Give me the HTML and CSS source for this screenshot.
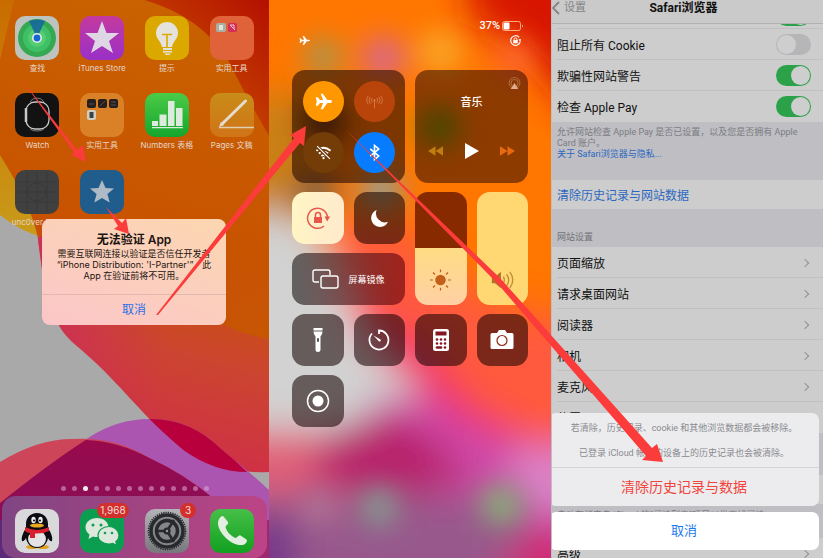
FILE: index.html
```html
<!DOCTYPE html>
<html lang="zh-CN">
<head>
<meta charset="utf-8">
<title>Safari浏览器</title>
<link rel="stylesheet" href="styles.css">
</head>
<body>
<main class="board">

<section class="phone home">
  <svg class="wallpaper" viewBox="0 0 270 558" preserveAspectRatio="none" aria-hidden="true">
    <defs>
      <linearGradient id="sun" x1="0.6" y1="0" x2="0.45" y2="1">
        <stop offset="0" stop-color="#c96200"/><stop offset=".5" stop-color="#c85200"/><stop offset=".72" stop-color="#cc4530"/><stop offset="1" stop-color="#d02a4c"/>
      </linearGradient>
      <linearGradient id="edge" x1="0" y1="0" x2="1" y2="0">
        <stop offset="0" stop-color="#cc2c60" stop-opacity=".9"/><stop offset=".8" stop-color="#cc3050" stop-opacity="0"/>
      </linearGradient>
      <linearGradient id="corner" x1="1" y1="0" x2="0.3" y2="0.8">
        <stop offset="0" stop-color="#b41000"/><stop offset="1" stop-color="#c84e00"/>
      </linearGradient>
      <linearGradient id="gold" x1="0" y1="0" x2="0" y2="1">
        <stop offset="0" stop-color="#c96c00"/><stop offset="1" stop-color="#c9a01c"/>
      </linearGradient>
      <linearGradient id="glow" x1="0" y1="0" x2="0" y2="1">
        <stop offset="0" stop-color="#c75600" stop-opacity="0"/><stop offset="1" stop-color="#c75600"/>
      </linearGradient>
      <linearGradient id="base" x1="0" y1="0" x2="1" y2="0">
        <stop offset="0" stop-color="#5c2a78"/><stop offset="1" stop-color="#a02870"/>
      </linearGradient>
      <linearGradient id="plum" x1="0" y1="0" x2="0" y2="1">
        <stop offset="0" stop-color="#990a4c"/><stop offset="1" stop-color="#80105c"/>
      </linearGradient>
    </defs>
    <rect width="270" height="558" fill="#a9a9a9"/>
    <path fill="url(#gold)" d="M0 0H100V260L42 237Q20 231 0 215Z"/>
    <path fill="url(#sun)" d="M14 0H270V472Q215 475 172 440C140 412 116 378 76 345C48 322 44 285 38 238Q32 206 0 155V60Z"/>
    <path fill="url(#edge)" d="M38 238C44 285 48 322 76 345C116 378 140 412 172 440L200 455V330L60 225Z"/>
    <path fill="url(#corner)" d="M145 0H270V136Q246 95 228 58Q200 16 145 0Z"/>
    <path fill="url(#glow)" d="M200 220H270V339Q242 334 224 324L200 310Z"/>
    <path fill="#ab55b0" d="M0 502Q55 458 90 437Q118 419 150 419Q190 418 222 449Q248 470 270 490V558H0Z"/>
    <path fill="#b8003c" d="M150 419Q190 418 222 449Q236 460 248 472Q215 472 184 450Q165 434 150 419Z"/>
    <path fill="#cd4558" d="M0 462Q38 439 72 439Q115 436 150 458Q185 474 215 499V558H0Z"/>
    <path fill="url(#plum)" d="M0 503Q50 463 86 440Q118 441 150 458Q185 474 215 499V558H0Z"/>
    <rect y="520" width="270" height="38" fill="url(#base)"/>
  </svg>

  <nav class="apps" aria-label="App">
    <a class="app" href="#"><svg class="icon" viewBox="0 0 44 44" aria-hidden="true"><rect width="44" height="44" rx="10" fill="#bdc3bf"/><circle cx="22" cy="22" r="19" fill="#35a852"/><circle cx="22" cy="22" r="14" fill="#3fc066"/><circle cx="22" cy="22" r="9" fill="#54cc70"/><path d="M22 22L14 5Q22 2 30 5Z" fill="#17679a" opacity=".9"/><circle cx="22" cy="22" r="5" fill="#e8eef0"/><circle cx="22" cy="22" r="3.400" fill="#1668d0"/></svg><span>查找</span></a>
    <a class="app" href="#"><svg class="icon" viewBox="0 0 44 44" aria-hidden="true"><defs><linearGradient id="it" x1="0" y1="0" x2="0" y2="1"><stop offset="0" stop-color="#c43a9e"/><stop offset="1" stop-color="#9a30c8"/></linearGradient></defs><rect width="44" height="44" rx="10" fill="url(#it)"/><path fill="#ded6e4" d="M22 5l4.500 12H39L29 25l4 12-11-7-11 7 4-12L5 17h12.500z"/></svg><span>iTunes Store</span></a>
    <a class="app" href="#"><svg class="icon" viewBox="0 0 44 44" aria-hidden="true"><rect width="44" height="44" rx="10" fill="#dba800"/><path fill="#e4e2da" d="M22 6a11 11 0 0 1 11 11c0 6-5 8-6 14H17c-1-6-6-8-6-14A11 11 0 0 1 22 6zM18 32h9v2h-9zm0 3h9v1.500h-9zm1 2.500h7L24 39h-3z"/><path d="M17 18.500h10M22 18.500V31" stroke="#dba800" stroke-width="1.600" fill="none"/></svg><span>提示</span></a>
    <a class="app" href="#"><svg class="icon" viewBox="0 0 44 44" aria-hidden="true"><rect width="44" height="44" rx="10" fill="#df6238"/><rect x="6" y="7" width="10" height="9" rx="2" fill="#a8b0a4"/><path d="M9 9h4v5H9z" fill="#e2e2da"/><rect x="18" y="7" width="9" height="9" rx="2" fill="#d42d58"/><path d="M20 9l5 5M20 9h4v4" stroke="#f0c8d4" fill="none"/></svg><span>实用工具</span></a>

    <a class="app" href="#"><svg class="icon" viewBox="0 0 44 44" aria-hidden="true"><rect width="44" height="44" rx="10" fill="#121212"/><rect x="11" y="9" width="23" height="27" rx="9" fill="none" stroke="#c8c8c8" stroke-width="1.300"/><path d="M15 9Q17 5 22 5t7 4M15 36q2 2 7 2t7-2" fill="none" stroke="#777"/><path d="M11 15v14" stroke="#c8c8c8" stroke-width="2.500"/></svg><span>Watch</span></a>
    <a class="app" href="#"><svg class="icon" viewBox="0 0 44 44" aria-hidden="true"><rect width="44" height="44" rx="10" fill="#da8027"/><g fill="#25201e"><rect x="7" y="6" width="9" height="9" rx="2"/><rect x="18" y="6" width="9" height="9" rx="2"/><rect x="29" y="6" width="9" height="9" rx="2"/></g><path d="M9 11h5M20 13l5-5M31 9h5m-5 3h5" stroke="#5c4c4c"/><rect x="7" y="17" width="9" height="10" rx="2" fill="#cfcfc6"/><path d="M9.500 19h4v6h-4z" fill="#3c4240"/></svg><span>实用工具</span></a>
    <a class="app" href="#"><svg class="icon" viewBox="0 0 44 44" aria-hidden="true"><defs><linearGradient id="nu" x1="0" y1="0" x2="0" y2="1"><stop offset="0" stop-color="#4cca48"/><stop offset="1" stop-color="#13a62c"/></linearGradient></defs><rect width="44" height="44" rx="10" fill="url(#nu)"/><path fill="#dcebdc" d="M7 28h6v5H7zM14.500 21.500h7V33h-7zM23 8h6.500v25H23zM31 15h6.500v18H31zM7 34h31v1.300H7z"/></svg><span>Numbers 表格</span></a>
    <a class="app" href="#"><svg class="icon" viewBox="0 0 44 44" aria-hidden="true"><defs><linearGradient id="pa" x1="0" y1="0" x2="0" y2="1"><stop offset="0" stop-color="#c88c18"/><stop offset="1" stop-color="#d07418"/></linearGradient></defs><rect width="44" height="44" rx="10" fill="url(#pa)"/><path d="M35.500 8L12 31" stroke="#e6dccd" stroke-width="3" stroke-linecap="round"/><path d="M9 34.500h35" stroke="#e0cfb0" stroke-width="1.500"/><path d="M9 34l2-5 3 3z" fill="#e6dccd"/></svg><span>Pages 文稿</span></a>

    <a class="app" href="#"><svg class="icon" viewBox="0 0 44 44" aria-hidden="true"><rect width="44" height="44" rx="10" fill="#404040"/><path d="M2 12h40M2 22h40M2 32h40M12 2v40M22 2v40M32 2v40" stroke="#383838"/><circle cx="22" cy="22" r="9" fill="none" stroke="#393939"/></svg><span>unc0ver Dark</span></a>
    <a class="app" href="#" aria-label="App"><svg class="icon" viewBox="0 0 44 44" aria-hidden="true"><rect width="44" height="44" rx="10" fill="#215d8c"/><path fill="#aebbc6" d="M22 10l3.500 8 8.500.6-6.600 5.400 2.300 8.500L22 28l-7.700 4.500 2.300-8.500L10 18.600l8.500-.6z"/></svg></a>
  </nav>

  <div class="pages" aria-hidden="true"><i></i><i></i><i class="on"></i><i></i><i></i><i></i><i></i><i></i><i></i><i></i><i></i><i></i><i></i><i></i></div>

  <nav class="dock" aria-label="Dock">
    <a class="app" href="#" aria-label="QQ"><svg class="icon" viewBox="0 0 44 44" aria-hidden="true"><rect width="44" height="44" rx="10" fill="#d9d9dc"/><ellipse cx="17" cy="38" rx="6" ry="2" fill="#e0a020"/><ellipse cx="28" cy="38" rx="6" ry="2" fill="#e0a020"/><path fill="#0c0c10" d="M22 4c-7 0-11 5-11 11v4C8 24 6 28 7 32c1 1 3-1 4-3 1 6 5 10 11 10s10-4 11-10c1 2 3 4 4 3 1-4-1-8-4-13v-4c0-6-4-11-11-11z"/><ellipse cx="22" cy="30" rx="9" ry="8" fill="#e4e4e6"/><path fill="#d8202c" d="M10 18q12 6 24 0v4q-6 3-14 2.500V29h-5v-5q-3 0-5-2z"/><ellipse cx="18.500" cy="11" rx="2.200" ry="3.200" fill="#eee"/><ellipse cx="25.500" cy="11" rx="2.200" ry="3.200" fill="#eee"/><circle cx="19" cy="11.500" r="1"/><circle cx="25" cy="11.500" r="1"/><ellipse cx="22" cy="16.500" rx="7" ry="2" fill="#eaa820"/></svg></a>
    <a class="app" href="#" aria-label="微信"><svg class="icon" viewBox="0 0 44 44" aria-hidden="true"><rect width="44" height="44" rx="10" fill="#0c9e50"/><path fill="#dce8dc" d="M17 9c6.500 0 11.500 4 11.500 9.500S23.500 28 17 28q-2 0-4-.6L8.500 30l1-4.500C7 23.500 5.500 21 5.500 18.500 5.500 13 10.500 9 17 9z"/><path fill="#dce8dc" stroke="#0c9e50" stroke-width="1.200" d="M28.500 17.500c5.700 0 10.500 4 10.500 9 0 2.500-1.300 4.600-3.200 6.200l1 3.800-4-2.100q-2 .6-4.300.6c-5.700 0-10.500-3.600-10.500-8.500s4.800-9 10.500-9z"/><g fill="#0c9e50"><circle cx="13" cy="16" r="1.500"/><circle cx="21" cy="16" r="1.500"/><circle cx="25" cy="24" r="1.300"/><circle cx="32" cy="24" r="1.300"/></g></svg><b class="badge">1,968</b></a>
    <a class="app" href="#" aria-label="设置"><svg class="icon" viewBox="0 0 44 44" aria-hidden="true"><defs><linearGradient id="se" x1="0" y1="0" x2="0" y2="1"><stop offset="0" stop-color="#b4b4b8"/><stop offset="1" stop-color="#77787c"/></linearGradient></defs><rect width="44" height="44" rx="10" fill="url(#se)"/><circle cx="22" cy="22" r="16" fill="#858689" stroke="#28292c" stroke-width="3.500"/><circle cx="22" cy="22" r="18.500" fill="none" stroke="#28292c" stroke-width="1.600" stroke-dasharray="1.300 1"/><circle cx="22" cy="22" r="10.500" fill="none" stroke="#28292c" stroke-width="3.500"/><path d="M22 22H10M22 22l7-11M22 22l7 11" stroke="#28292c" stroke-width="2.600"/><circle cx="22" cy="22" r="3.600" fill="#28292c"/><circle cx="22" cy="22" r="1.200" fill="#999"/></svg><b class="badge small">3</b></a>
    <a class="app" href="#" aria-label="电话"><svg class="icon" viewBox="0 0 44 44" aria-hidden="true"><defs><linearGradient id="ph" x1="0" y1="0" x2="0" y2="1"><stop offset="0" stop-color="#46bf48"/><stop offset="1" stop-color="#12a020"/></linearGradient></defs><rect width="44" height="44" rx="10" fill="url(#ph)"/><path fill="#e2eee0" d="M9 10c2-3 4-4 5-2l4 5c1 2-2 3-2.500 5 1 5 6 9 10 11 2 0 3-3.500 5-2.500l6 4c1.500 1.500-1 5-4 5.500C20 37 7 22 8 13z"/></svg></a>
  </nav>

  <div class="alert" role="alertdialog" aria-labelledby="alert-title">
    <h2 id="alert-title">无法验证 App</h2>
    <p>需要互联网连接以验证是否信任开发者<br>“iPhone Distribution: 'I-Partner'”，此<br>App 在验证前将不可用。</p>
    <button type="button">取消</button>
  </div>
</section>

<section class="phone control">
  <svg class="wallpaper" viewBox="0 0 282 558" preserveAspectRatio="none" aria-hidden="true">
    <defs>
      <filter id="soft" x="-50%" y="-50%" width="200%" height="200%"><feGaussianBlur stdDeviation="18"/></filter>
      <filter id="spot" x="-100%" y="-100%" width="300%" height="300%"><feGaussianBlur stdDeviation="14"/></filter>
    </defs>
    <rect width="282" height="558" fill="#ff7600"/>
    <g filter="url(#soft)">
      <path fill="#d81400" d="M200-60H340V110H300Q270 50 200 20Z"/>
      <path fill="#ff5a3c" d="M60 220L140 225Q200 320 340 320V520H120Z"/>
      <path fill="#f02c6a" d="M80 300L160 345Q200 420 250 425L230 460H150Z"/>
      <path fill="#d2d2d2" d="M-60 205H40Q70 280 100 345L165 405 130 450H-60Z"/>
      <path fill="#e06078" d="M-60 430L50 430 90 500H-60Z"/>
      <path fill="#cf48a8" d="M100 400L165 395Q220 455 340 440V530H120Z"/>
      <path fill="#dd84c8" d="M240 450H340V510H250Z"/>
      <path fill="#b8206c" d="M60 430L120 412Q170 435 200 480L120 500 40 480Z"/>
      <path fill="#98588c" d="M-40 495H260V600H-40Z"/>
      <path fill="#74348a" d="M-40 520H25V600H-40Z"/>
      <path fill="#d02a74" d="M255 530H330V600H220Z"/>
      <path fill="#c88018" d="M-30 95H40V215H-30Z"/>
    </g>
    <g filter="url(#spot)">
      <circle cx="54" cy="57" r="18" fill="#a09a58"/>
      <circle cx="114" cy="58" r="22" fill="#d8688c"/>
      <circle cx="172" cy="52" r="22" fill="#f8a82c"/>
      <circle cx="245" cy="60" r="18" fill="#ff6a38"/>
      <circle cx="56" cy="122" r="20" fill="#302010"/>
      <circle cx="112" cy="190" r="20" fill="#88a0a0"/>
      <circle cx="48" cy="190" r="22" fill="#806040"/>
      <circle cx="170" cy="127" r="20" fill="#609000"/>
      <circle cx="50" cy="508" r="16" fill="#b07a98"/>
      <circle cx="110" cy="507" r="19" fill="#82a090"/>
      <circle cx="232" cy="505" r="20" fill="#84b474"/>
    </g>
  </svg>

  <header class="status">
    <div class="battery"><span>37%</span><svg viewBox="0 0 22 10" aria-hidden="true"><rect x=".5" y=".5" width="18" height="9" rx="2" fill="none" stroke="#ffb080"/><rect x="1.500" y="1.500" width="6" height="7" rx="1" fill="#fff"/><path d="M20 3.500q2 1.500 0 3z" fill="#ffb080"/></svg></div>
    <div class="flags">
      <svg viewBox="0 0 24 24" aria-hidden="true"><path fill="#fff" d="M1 7h2.500l3 3.500H11L8 2h3l6 8.500h4q3 0 3 1.500t-3 1.500h-4L11 22H8l3-8.500H6.500l-3 3.500H1l1.500-5z"/></svg>
      <svg viewBox="0 0 24 24" aria-hidden="true"><path d="M20 5a10.500 10.500 0 1 0 2.500 9" fill="none" stroke="#fff" stroke-width="2.500"/><path d="M18 9h7l-3 5z" fill="#fff"/><path d="M7 11h10v7H7z" fill="#fff"/><path d="M9 11V9q0-3 3-3t3 3v2" fill="none" stroke="#fff" stroke-width="2"/></svg>
    </div>
  </header>

  <div class="tiles">
    <div class="tile connect">
      <button class="round air" type="button" aria-label="飞行模式"><svg viewBox="0 0 24 24"><path fill="#fff" d="M1 6h3l3 4h4.500L8 1h3l6.500 9h4q2.500 0 2.500 2t-2.500 2h-4L11 23H8l3.500-9H7l-3 4H1l1.500-6z"/></svg></button>
      <button class="round cell" type="button" aria-label="蜂窝数据"><svg viewBox="0 0 30 24" fill="none" stroke="#d98048" stroke-width="1.500"><path d="M15 11v13M11 6q-3 3.500 0 8M19 6q3 3.500 0 8M7.500 4q-4.500 5.500 0 12M22.500 4q4.500 5.500 0 12M4 2q-5.500 7 0 15M26 2q5.500 7 0 15"/><circle cx="15" cy="10" r="2" fill="#d98048" stroke="none"/></svg></button>
      <button class="round wifi" type="button" aria-label="无线局域网"><svg viewBox="0 0 24 24" fill="none" stroke="#fff"><path stroke-width="2.600" d="M2 9.500Q12 1 22 9.500M5.500 13.500Q12 8 18.500 13.500M9 17q3-2.500 6 0"/><circle cx="12" cy="20" r="1.600" fill="#fff" stroke="none"/><path stroke="#6b3505" stroke-width="5" d="M3 4l18 16"/><path stroke-width="1.800" d="M3 3l18 18"/></svg></button>
      <button class="round blue" type="button" aria-label="蓝牙"><svg viewBox="0 0 24 24" fill="none" stroke="#fff" stroke-width="2.200"><path d="M6 7l12 10-6 5V2l6 5L6 17"/></svg></button>
    </div>

    <div class="tile music">
      <svg class="cast" viewBox="0 0 24 24" fill="none" stroke="#b07040" stroke-width="1.800" aria-hidden="true"><circle cx="12" cy="11" r="10"/><circle cx="12" cy="11" r="6.500"/><path d="M12 11l7 11H5z" fill="#dcae8c" stroke="none"/></svg>
      <h2>音乐</h2>
      <div class="transport">
        <button type="button" aria-label="上一首"><svg viewBox="0 0 16 12"><path fill="#c07c10" d="M8 1v10L0 6zM16 1v10L8 6z"/></svg></button>
        <button class="play" type="button" aria-label="播放"><svg viewBox="0 0 14 16"><path fill="#fff" d="M0 0l14 8-14 8z"/></svg></button>
        <button type="button" aria-label="下一首"><svg viewBox="0 0 16 12"><path fill="#e86a10" d="M0 1v10l8-5zM8 1v10l8-5z"/></svg></button>
      </div>
    </div>

    <button class="tile lock" type="button" aria-label="竖排方向锁定"><svg class="g24" viewBox="0 0 24 24"><path fill="none" stroke="#e8574c" stroke-width="1.500" d="M18 20A10 10 0 1 1 21.500 11"/><path fill="#e8574c" d="M18.500 10.500H24l-2.700 5z"/><path fill="#e8574c" d="M8 11h8v6H8z"/><path fill="none" stroke="#e8574c" stroke-width="1.500" d="M9.500 11V9q0-2.500 2.500-2.500T14.500 9v2"/></svg></button>
    <button class="tile" type="button" aria-label="勿扰模式"><svg class="g18" viewBox="0 0 20 20"><path fill="#fff" d="M7 1a9.300 9.300 0 1 0 12 12.500A9.500 9.500 0 0 1 7 1z"/></svg></button>

    <label class="tile slider bright"><input type="range" min="0" max="100" value="50" aria-label="亮度"><svg viewBox="0 0 24 24"><circle cx="12" cy="12" r="5.500" fill="#c2601a"/><path stroke="#c2601a" stroke-width="1.300" d="M12 1v3M12 20v3M1 12h3M20 12h3M4.200 4.200l2 2M17.800 17.800l2 2M4.200 19.800l2-2M17.800 6.200l2-2"/></svg></label>
    <label class="tile slider volume"><input type="range" min="0" max="100" value="100" aria-label="音量"><svg viewBox="0 0 28 24"><path fill="#b07028" d="M1 8h4l7-6v20l-7-6H1z"/><path fill="none" stroke="#c08c3c" stroke-width="1.600" d="M15 8q2.500 4 0 8M19 5q5 7 0 14M23 2q7 10 0 20"/></svg></label>

    <button class="tile mirror" type="button"><svg viewBox="0 0 27 20" fill="none" stroke="#fff" stroke-width="1.400"><path d="M7 13H3q-2 0-2-2V3q0-2 2-2h13q2 0 2 2v3"/><rect x="9" y="7" width="17" height="12" rx="2"/></svg><span>屏幕镜像</span></button>

    <button class="tile" type="button" aria-label="手电筒"><svg class="g24" viewBox="0 0 24 24"><path fill="#fff" d="M7.500 0h9v2.500h-9zM7.500 3.500h9q0 3-2 5V22q0 2-2.500 2t-2.500-2V8.500q-2-2-2-5z"/><rect x="11" y="10" width="2" height="4" rx="1" fill="#555"/></svg></button>
    <button class="tile" type="button" aria-label="计时器"><svg class="g24" viewBox="0 0 24 24"><path fill="none" stroke="#fff" stroke-width="1.800" d="M12 6V2.500a9.500 9.500 0 1 1-7 3"/><path fill="#fff" d="M6.500 7.500l7 4q1 2-1.500 2z"/></svg></button>
    <button class="tile" type="button" aria-label="计算器"><svg class="g24" viewBox="0 0 24 24"><rect x="4" y="1" width="16" height="22" rx="2.500" fill="#fff"/><g fill="#841522"><rect x="6.500" y="3.500" width="11" height="4"/><circle cx="8" cy="11.500" r="1.300"/><circle cx="12" cy="11.500" r="1.300"/><circle cx="16" cy="11.500" r="1.300"/><circle cx="8" cy="15.500" r="1.300"/><circle cx="12" cy="15.500" r="1.300"/><circle cx="16" cy="15.500" r="1.300"/><rect x="6.700" y="18.200" width="6.600" height="2.600" rx="1.300"/><circle cx="16" cy="19.500" r="1.300"/></g></svg></button>
    <button class="tile" type="button" aria-label="相机"><svg class="g24" viewBox="0 0 24 24"><path fill="#fff" d="M2 5h5l2-3h6l2 3h5q1.500 0 1.500 1.500v13Q23.500 21 22 21H2Q.5 21 .5 19.500v-13Q.5 5 2 5z"/><circle cx="12" cy="12.500" r="5" fill="#fff" stroke="#8c2c14" stroke-width="1.200"/></svg></button>

    <button class="tile" type="button" aria-label="屏幕录制"><svg class="g24" viewBox="0 0 24 24"><circle cx="12" cy="12" r="10.500" fill="none" stroke="#fff" stroke-width="1.500"/><circle cx="12" cy="12" r="5.500" fill="#fff"/></svg></button>
  </div>
</section>

<section class="phone settings">
  <header class="bar">
    <a class="back" href="#"><svg viewBox="0 0 8 14" aria-hidden="true"><path d="M7 1L1 7l6 6" fill="none" stroke="#858587" stroke-width="1.800"/></svg>设置</a>
    <h1>Safari浏览器</h1>
  </header>
  <div class="list">
    <label class="row first"><span></span><input class="switch" type="checkbox" checked aria-label="阻止跨网站跟踪"></label>
    <label class="row"><span>阻止所有 Cookie</span><input class="switch" type="checkbox"></label>
    <label class="row"><span>欺骗性网站警告</span><input class="switch" type="checkbox" checked></label>
    <label class="row last"><span>检查 Apple Pay</span><input class="switch" type="checkbox" checked></label>
    <p class="note">允许网站检查 Apple Pay 是否已设置，以及您是否拥有 Apple Card 账户。<br><a href="#">关于 Safari浏览器与隐私...</a></p>
    <button class="row last clear" type="button">清除历史记录与网站数据</button>
    <h2 class="heading">网站设置</h2>
    <a class="row" href="#"><span>页面缩放</span><i class="chevron"></i></a>
    <a class="row" href="#"><span>请求桌面网站</span><i class="chevron"></i></a>
    <a class="row" href="#"><span>阅读器</span><i class="chevron"></i></a>
    <a class="row" href="#"><span>相机</span><i class="chevron"></i></a>
    <a class="row" href="#"><span>麦克风</span><i class="chevron"></i></a>
    <a class="row last" href="#"><span>位置</span><i class="chevron"></i></a>
    <div class="gap"></div>
    <div class="row last short"></div>
    <p class="note offline">自动存储来自 iCloud 的“阅读列表”项目以供离线阅读。</p>
    <a class="row last" href="#"><span>高级</span><i class="chevron"></i></a>
  </div>
  <div class="sheet" role="dialog" aria-label="清除历史记录与数据">
    <div class="choices">
      <p>若清除，历史记录、cookie 和其他浏览数据都会被移除。</p>
      <p>已登录 iCloud 帐户的设备上的历史记录也会被清除。</p>
      <button class="danger" type="button">清除历史记录与数据</button>
    </div>
    <button class="cancel" type="button">取消</button>
  </div>
</section>

<svg class="arrows" viewBox="0 0 823 558" preserveAspectRatio="none" aria-hidden="true">
  <g fill="#fc3b3b">
    <path d="M19 76L77 150 83 145 86 162 71 155 74 152Z"/>
    <path d="M106 207L122 223 126 218 129 234 114 229 118 226Z"/>
    <path d="M156 315L294 138 290 135 306 126 304 146 300 143 158 315Z"/>
    <path d="M346 130L500 278 652 448 657 444 663 462 642 460 646 456 497 283Z"/>
  </g>
</svg>
</main>
</body>
</html>
```
FILE: styles.css
```css
* { box-sizing: border-box; }

body {
  margin: 0;
  font-family: Inter, "Noto Sans CJK SC", sans-serif;
}

h1, h2, p { margin: 0; }
a { color: inherit; text-decoration: none; }
button { border: 0; padding: 0; background: none; font: inherit; color: inherit; }
svg { display: block; }

.board {
  position: relative;
  display: grid;
  grid-template-columns: 269fr 282fr 272fr;
  grid-template-rows: 100%;
  height: 100vh;
  overflow: hidden;
}

.phone { position: relative; overflow: hidden; min-width: 0; }
.wallpaper { position: absolute; inset: 0; width: 100%; height: 100%; }
.arrows { position: absolute; inset: 0; width: 100%; height: 100%; pointer-events: none; }

/* Home screen */
.home { display: flex; flex-direction: column; }
.apps, .pages, .dock { position: relative; }
.apps {
  display: grid;
  grid-template-columns: repeat(4, 1fr);
  row-gap: 16px;
  padding: 16px 5px 0;
}
.app {
  position: relative;
  display: flex;
  flex-direction: column;
  align-items: center;
  color: #e6d5c8;
  font-size: 8px;
  line-height: 17px;
  white-space: nowrap;
}
.icon { width: 44px; height: 44px; }

.pages { display: flex; justify-content: center; gap: 6px; margin-top: auto; padding-bottom: 5px; }
.pages i { width: 5px; height: 5px; border-radius: 50%; background: rgba(225, 170, 215, .55); }
.pages .on { background: #eee; }

.dock {
  display: grid;
  grid-template-columns: repeat(4, 1fr);
  margin: 0 2px;
  padding: 13px 3px 5px;
  border-radius: 14px;
  background: linear-gradient(90deg, #804583, #a04482 50%, #bc4486);
}
.badge {
  position: absolute;
  top: -6px;
  left: 50%;
  margin-left: -5px;
  padding: 0 3px;
  border-radius: 8px;
  background: #d3302c;
  color: #f0dcdc;
  font-size: 10px;
  font-weight: 400;
  line-height: 15px;
}
.badge.small { margin-left: 13px; padding: 0 5px; }

.alert {
  position: absolute;
  top: 219px;
  left: 42px;
  right: 43px;
  border-radius: 8px;
  background: linear-gradient(200deg, #fcd6b0, #fbd0bc 45%, #fcc6c8);
  color: #1c1410;
  text-align: center;
}
.alert h2 { padding-top: 13px; font-size: 12px; font-weight: 600; line-height: 16px; }
.alert p { padding-bottom: 13px; font-size: 9px; line-height: 11px; white-space: nowrap; }
.alert button {
  width: 100%;
  border-top: 1px solid #e4b8ae;
  color: #2a70e8;
  font-size: 12px;
  line-height: 30px;
}

/* Control centre */
.status { position: relative; padding: 19px 27px 0 30px; color: #fff; }
.battery { display: flex; align-items: center; justify-content: flex-end; gap: 2px; font: 500 11px/13px Roboto, sans-serif; }
.battery svg { width: 22px; height: 10px; }
.flags { display: flex; justify-content: space-between; margin: 3px 3px 0 0; }
.flags svg { width: 11px; height: 11px; }

.tiles {
  position: relative;
  display: grid;
  grid-template-columns: repeat(4, 1fr);
  grid-auto-rows: 52px;
  gap: 9px 10px;
  padding: 24px 23px 0;
}
.tile {
  display: flex;
  align-items: center;
  justify-content: center;
  border-radius: 13px;
  background: rgba(20, 0, 0, .56);
  color: #fff;
}
.g24 { width: 24px; height: 24px; }
.g18 { width: 19px; height: 19px; }
.connect, .music { grid-column: span 2; grid-row: span 2; }
.connect {
  display: grid;
  grid-template-columns: 41px 41px;
  gap: 10px;
  place-content: center;
  background: rgba(40, 12, 0, .6);
}
.round {
  display: flex;
  align-items: center;
  justify-content: center;
  height: 41px;
  border-radius: 50%;
}
.round svg { width: 17px; height: 17px; }
.air { background: #ff9800; }
.cell { background: #b8440a; }
.wifi { background: #743c06; }
.blue { background: #087cff; }

.music { position: relative; flex-direction: column; justify-content: flex-start; background: rgba(30, 0, 0, .5); }
.music h2 { padding-top: 24px; font-size: 11px; font-weight: 500; line-height: 16px; }
.cast { position: absolute; top: 7px; right: 7px; width: 13px; height: 13px; }
.transport { display: flex; align-items: center; justify-content: space-between; align-self: stretch; margin: 33px 13px 0; }
.transport svg { width: 15px; height: 12px; }
.transport .play svg { width: 14px; height: 16px; }

.lock { background: linear-gradient(100deg, #fff6c4, #ffe9cc); }
.mirror { grid-column: span 2; gap: 9px; font-size: 9px; background: linear-gradient(90deg, rgba(60, 60, 60, .75), rgba(120, 10, 15, .7)); }
.mirror svg { width: 27px; height: 20px; }

.slider { position: relative; grid-row: span 2; align-items: flex-end; overflow: hidden; padding-bottom: 13px; }
.slider svg { position: relative; width: 23px; height: 24px; pointer-events: none; }
.slider input {
  position: absolute;
  inset: 0;
  width: 100%;
  height: 100%;
  margin: 0;
  appearance: none;
  background: none;
  writing-mode: vertical-lr;
  direction: rtl;
}
.slider input::-webkit-slider-thumb { appearance: none; width: 100%; height: 1px; background: none; }
.bright { background: linear-gradient(#882a00 50%, #ffdc84 50%, #ffd0a4); }
.volume { background: #ffd874; }

/* Settings */
.settings {
  border-left: 1px solid #c0c0c2;
  background: #bebec3;
  font-family: Roboto, "Noto Sans CJK SC", sans-serif;
}
.bar {
  position: absolute;
  inset: 0 0 auto;
  z-index: 1;
  height: 24px;
  padding-right: 8px;
  border-bottom: 1px solid #b2b2b4;
  background: #c9cac9;
  text-align: center;
}
.bar h1 { color: #111; font-size: 12px; font-weight: 700; line-height: 16px; }
.back {
  position: absolute;
  top: 0;
  left: 0;
  display: flex;
  align-items: center;
  gap: 4px;
  color: #858587;
  font-size: 11px;
  line-height: 16px;
}
.back svg { width: 8px; height: 14px; }

.row {
  display: flex;
  align-items: center;
  justify-content: space-between;
  width: 100%;
  height: 31px;
  padding: 0 12px 0 5px;
  background: linear-gradient(#c0c0c2, #c0c0c2) 5px 100% / 100% 1px no-repeat #cdcdcd;
  color: #111;
  font-size: 12px;
  text-align: left;
}
.row.last { background: #cdcdcd; }
.row.first, .row.short, .row.clear { height: 29px; }
.row.first { padding-top: 2px; }
.row.clear { color: #2c68c0; }
.switch {
  appearance: none;
  flex: none;
  width: 35px;
  height: 21px;
  margin: 0;
  padding: 1px;
  border-radius: 11px;
  background: #b6b6b8;
}
.switch::before {
  content: "";
  display: block;
  width: 19px;
  height: 19px;
  border-radius: 50%;
  background: #cecece;
}
.switch:checked { background: #2ba24a; }
.switch:checked::before { margin-left: auto; }

.note { padding: 5px 5px 20px; color: #7c7c82; font-size: 9px; line-height: 11px; }
.note a { color: #2c68c0; }
.offline { padding: 6px 5px 17px; white-space: nowrap; }
.heading { padding: 22px 5px 4px; color: #737379; font-size: 9px; font-weight: 400; line-height: 12px; }
.chevron {
  width: 6px;
  height: 6px;
  margin-right: 3px;
  border: solid #929294;
  border-width: 1px 1px 0 0;
  transform: rotate(45deg);
}
.gap { height: 42px; }

.sheet { position: absolute; left: -3px; right: 4px; bottom: 8px; text-align: center; }
.choices { overflow: hidden; border-radius: 7px; background: #ececee; }
.choices p { padding-bottom: 8px; color: #8a8a8e; font-size: 9px; line-height: 12px; }
.choices p:first-child { padding: 9px 0 13px; }
.danger, .cancel { display: block; width: 100%; line-height: 38px; }
.danger { border-top: 1px solid #d4d4d6; color: #f0443c; font-size: 14px; }
.cancel { margin-top: 6px; border-radius: 7px; background: #fff; color: #1c78f0; font-size: 13px; }
```
